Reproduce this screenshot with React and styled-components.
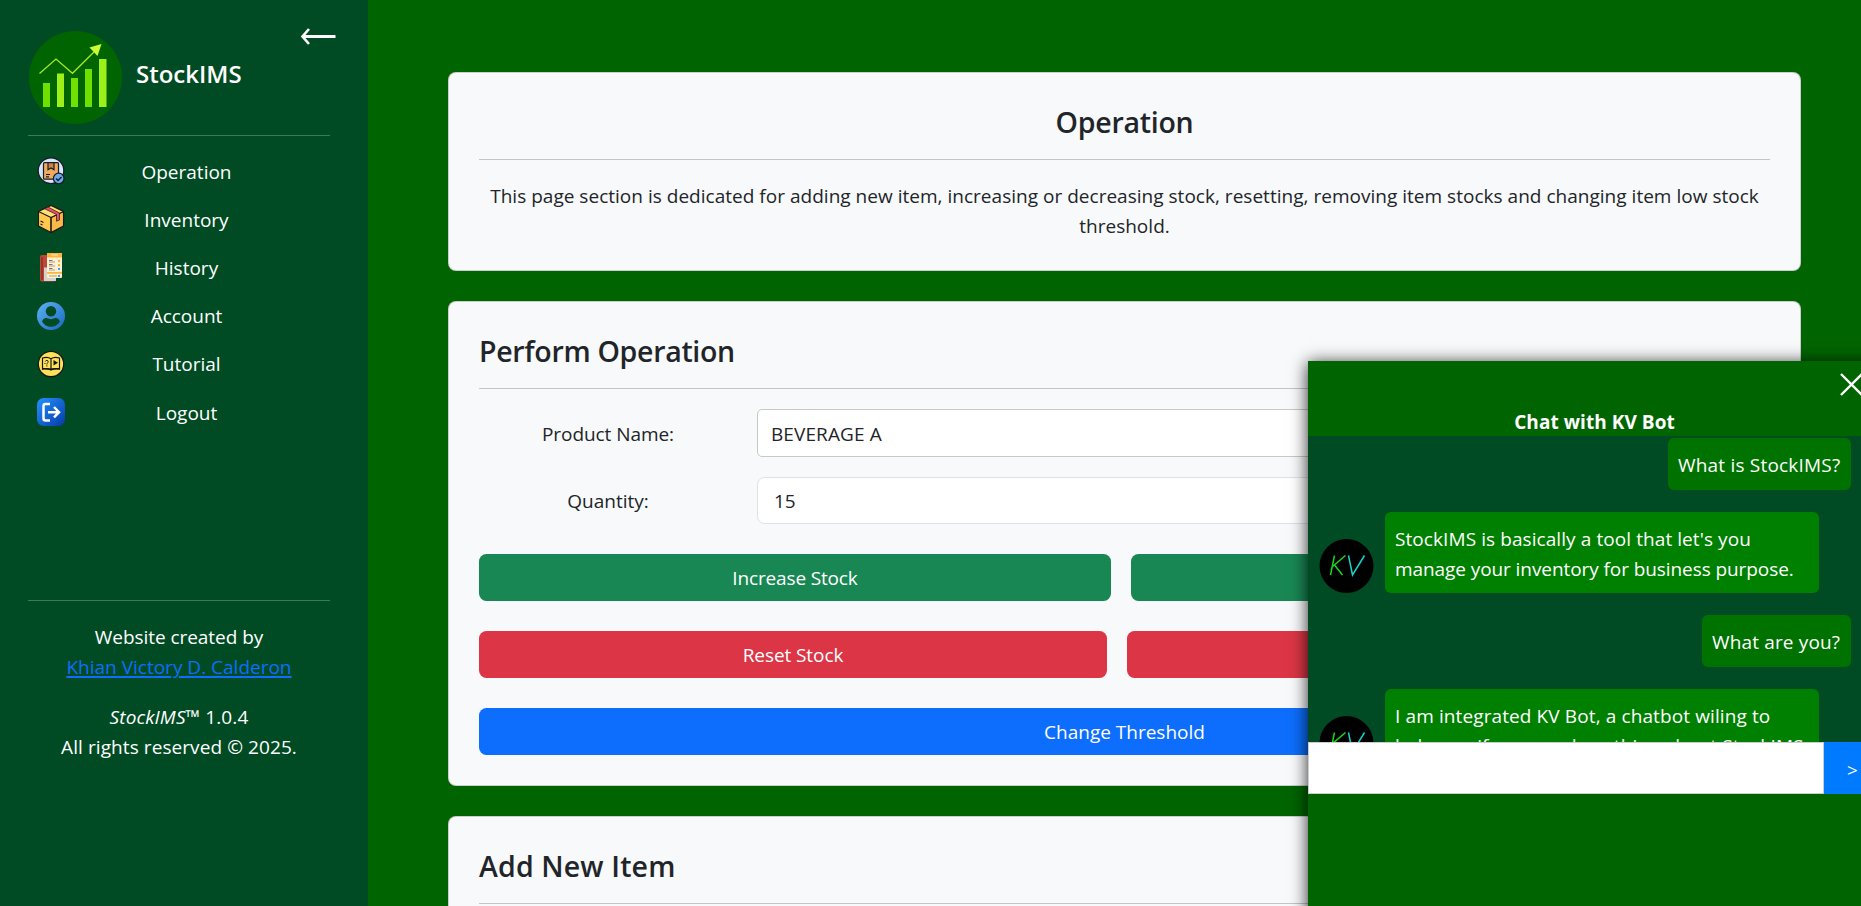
import React from "react";
import styled, { createGlobalStyle } from "styled-components";

const GlobalStyle = createGlobalStyle`
  *, *::before, *::after { box-sizing: border-box; }
  html, body { height: 100%; overflow: hidden; }
  body {
    margin: 0;
    background: #006400;
    color: #212529;
    font-family: "Open Sans", "Noto Sans", sans-serif;
    font-size: 19px;
    line-height: 30px;
  }
  h1, h2, p { margin: 0; }
  button, input, select { font: inherit; }
`;

/* Text fitted to a set advance width through its tracking */
const T = styled.span`
  letter-spacing: ${(p) => p.$ls || 0}px;
`;

const Page = styled.div`
  display: flex;
  width: 1861px;
  height: 906px;
  overflow: hidden;
  position: relative;
`;

const Sidebar = styled.aside`
  width: 368px;
  flex: none;
  height: 906px;
  background: #004b23;
  color: #fff;
  padding: 31px 38px 0 28px;
  display: flex;
  flex-direction: column;
`;

const Brand = styled.div`
  display: flex;
  align-items: center;
  height: 93px;
  padding-left: 1px;
`;

const BrandName = styled.h1`
  font-size: 24px;
  font-weight: 600;
  line-height: 30px;
  margin: -7px 0 0 14px;
  flex: 1;
`;

const CollapseButton = styled.button`
  align-self: flex-start;
  margin: -4px -6px 0 0;
  padding: 0;
  border: 0;
  background: none;
  display: flex;
`;

const SideRule = styled.hr`
  width: 302px;
  height: 1px;
  border: 0;
  margin: ${(p) => p.$top}px 0 0;
  background: #40785a;
`;

const Nav = styled.nav`
  display: flex;
  flex-direction: column;
  margin-top: 11px;
`;

const NavItem = styled.a`
  display: flex;
  align-items: center;
  height: 48.2px;
  padding-left: 9px;
  svg { flex: none; }
  span { width: 243px; text-align: center; padding-top: 1px; }
`;

const Credits = styled.div`
  margin-top: 21px;
  text-align: center;
  display: flex;
  flex-direction: column;
  gap: 20px;
  width: 302px;
`;

const CreditLink = styled.a`
  color: #0d6efd;
  text-decoration: underline;
  text-decoration-thickness: 2px;
  text-underline-offset: 2px;
`;

const Main = styled.main`
  flex: 1;
  padding: 72px 60px 0 80px;
  display: flex;
  flex-direction: column;
  gap: 30px;
`;

const Card = styled.section`
  flex: none;
  height: ${(p) => p.$h}px;
  padding: 30px;
  border: 1px solid rgba(0, 0, 0, 0.175);
  border-radius: 8px;
  background: #f8f9fa;
  text-align: ${(p) => (p.$center ? "center" : "left")};
`;

const CardTitle = styled.h2`
  font-size: 28.5px;
  font-weight: 600;
  line-height: 36px;
  height: 36px;
  padding-top: 1px;
`;

const Description = styled.p`
  padding-top: 1px;
`;

const Rule = styled.hr`
  height: 1px;
  border: 0;
  margin: 20px 0;
  background: #c2c4c6;
`;

const Field = styled.label`
  display: grid;
  grid-template-columns: 258px 1fr;
  column-gap: 20px;
  align-items: center;
  margin-bottom: 20px;
  > span { text-align: center; padding-top: 1px; }
`;

const Control = styled.div`
  height: ${(p) => (p.$select ? 48 : 47)}px;
  padding: ${(p) => (p.$select ? "2px 13px 0" : "0 16px")};
  display: flex;
  align-items: center;
  background: #fff;
  border: 1px solid ${(p) => (p.$select ? "#c8c8c8" : "#dee2e6")};
  border-radius: ${(p) => (p.$select ? 5 : 7.5)}px;
`;

const ButtonRow = styled.div`
  display: grid;
  grid-template-columns: ${(p) => p.$cols};
  gap: 20px;
  margin-top: 30px;
`;

const Button = styled.button`
  height: 47px;
  border: 0;
  border-radius: 7.5px;
  padding: 0;
  color: #fff;
  background: ${(p) => p.$bg};
`;

const ChatPanel = styled.section`
  position: absolute;
  left: 1308px;
  top: 361px;
  width: 573px;
  height: 565px;
  background: #006400;
  color: #fff;
  box-shadow: 0 2px 16px rgba(0, 0, 0, 0.85);
`;

const ChatHeader = styled.header`
  height: 75px;
  display: flex;
  flex-direction: column;
`;

const CloseButton = styled.button`
  align-self: flex-end;
  margin: 11px 17px 0 0;
  padding: 0;
  border: 0;
  background: none;
  display: flex;
  height: 25px;
`;

const ChatTitle = styled.div`
  margin-top: 10px;
  text-align: center;
  font-weight: 700;
`;

const Messages = styled.div`
  height: 306px;
  overflow: hidden;
  background: #004b23;
  padding: 2px 30px 0 11px;
  display: flex;
  flex-direction: column;
  gap: 22px;
`;

const UserBubble = styled.div`
  align-self: flex-end;
  flex: none;
  height: 52px;
  padding: 12px 10px 10px;
  border-radius: 6px;
  background: #007200;
  width: ${(p) => p.$w}px;
  white-space: nowrap;
`;

const BotRow = styled.div`
  display: flex;
  align-items: flex-end;
  flex: none;
  gap: 11px;
`;

const BotBubble = styled.div`
  width: 434px;
  height: 81px;
  padding: 12px 10px 9px;
  border-radius: 6px;
  background: #008000;
  white-space: nowrap;
`;

const Composer = styled.div`
  display: flex;
  height: 52px;
`;

const ChatInput = styled.input`
  width: 516px;
  border: 1px solid #ccc;
  background: #fff;
  outline: none;
  padding: 0 10px;
`;

const SendButton = styled.button`
  flex: 1;
  border: 0;
  padding: 4px 0 0;
  background: #007bff;
  color: #fff;
`;

const Logo = () => (
  <svg width="93" height="93" viewBox="0 0 93 93">
    <circle cx="46.5" cy="46.5" r="46.5" fill="#006400" />
    <g fill="#70e000">
      <rect x="14" y="52" width="7" height="24" />
      <rect x="42" y="47" width="7" height="29" />
      <rect x="56" y="38" width="7" height="38" />
    </g>
    <g fill="#9ef01a">
      <rect x="28" y="42.500" width="7" height="33.500" />
      <rect x="70" y="28" width="7.500" height="48" />
    </g>
    <path d="M10.500 42.500 27 28l16.500 14.300L66 20" fill="none" stroke="#a4e82a" strokeWidth="1.300" />
    <path d="M60.500 16.500 72.500 13l-4 12Z" fill="#ccff33" />
  </svg>
);

const ArrowLeft = () => (
  <svg width="36" height="20" viewBox="0 0 36 20" fill="none" stroke="#fff">
    <path d="M2.500 9.500H35.500" strokeWidth="3" />
    <path d="M9 2 2.500 9.500 9 17" strokeWidth="2.600" />
  </svg>
);

const OperationIcon = () => (
  <svg width="28" height="28" viewBox="0 0 28 28" stroke="#1b1b22" strokeWidth="1.200">
    <circle cx="14" cy="13.700" r="12.800" fill="#d5e5fb" />
    <rect x="6.500" y="5.700" width="15" height="16.500" rx="1" fill="#efaa60" />
    <path d="M11 5.700h6v7l-3-1.700-3 1.700Z" fill="#c98546" />
    <path d="M9 17.500h4M9 19.800h3" fill="none" />
    <circle cx="21.700" cy="21.500" r="5.300" fill="#6aaaf0" />
    <path d="m19 21.500 2 2 3.500-3.500" fill="none" strokeWidth="1.500" />
  </svg>
);

const InventoryIcon = () => (
  <svg width="28" height="30" viewBox="0 0 28 30" stroke="#1e1712" strokeWidth="1.100" strokeLinejoin="round">
    <path d="M1.500 7.500 14 1.500l12.500 6V22L14 28.500 1.500 22Z" fill="#ffc94f" />
    <path d="M14 13.500 26.500 7.500V22L14 28.500Z" fill="#f8b84a" />
    <path d="M1.500 7.500 14 1.500l12.500 6L14 13.500Z" fill="#ffdf73" />
    <path d="m7.500 4.700 3.500-1.700 11.500 6v7l-3 1.200v-6.700Z" fill="#e8506c" strokeWidth=".7" />
    <path d="M14 13.500v15M3.500 17l3 1.500M3.500 20l2 1" fill="none" />
  </svg>
);

const HistoryIcon = () => (
  <svg width="28" height="30" viewBox="0 0 28 30">
    <rect x="3" y="3" width="16" height="26.500" rx="2" fill="#b94a38" />
    <path d="M5 5v23" stroke="#8e3028" strokeWidth="1.500" />
    <path d="M7 15.500h12V29H7Z" fill="#d8d0cc" />
    <rect x="10" y="1" width="15" height="25" rx="1" fill="#fff0cf" />
    <path d="M10 1h15v4.500H10ZM10 20h15v1.700H10Z" fill="#ffb43f" />
    <path d="M14 3h7" stroke="#ffe0a0" strokeWidth="1.200" />
    <path d="M12 8.500h3.500M12 12.500h3.500M12 16.500h3.500" stroke="#777" strokeWidth="1" />
    <path d="M12 10h6M12 14h6M12 18h6M12 24h8" stroke="#958b80" strokeWidth=".8" />
    <path d="M21 9h2M21 13h2" stroke="#ffad3a" strokeWidth="2" />
    <path d="M21 17h2M21 24h2" stroke="#3f9be8" strokeWidth="2" />
  </svg>
);

const AccountIcon = () => (
  <svg width="28" height="28" viewBox="0 0 28 28">
    <defs>
      <linearGradient id="account" x1="0" y1="0" x2="1" y2="1">
        <stop offset="0" stopColor="#61b2f2" />
        <stop offset="1" stopColor="#1769c4" />
      </linearGradient>
    </defs>
    <circle cx="14" cy="14" r="14" fill="url(#account)" />
    <circle cx="14" cy="9.300" r="5.200" fill="#004b23" />
    <path d="M5 19.500c1-3 3.500-4.200 5.500-3.200 2.200 1.100 4.800 1.100 7 0 2-1 4.500.2 5.500 3.200-2 3.500-5.300 5.300-9 5.300s-7-1.800-9-5.300Z" fill="#004b23" />
  </svg>
);

const TutorialIcon = () => (
  <svg width="28" height="28" viewBox="0 0 28 28" stroke="#171717" fill="none">
    <circle cx="14" cy="14" r="12.700" fill="#ffe25a" strokeWidth="1.200" />
    <path d="M5.500 8c3-1 6-1 8.500.7C16.500 7 19.500 7 22.500 8v11c-3-.7-6-.5-8.500.6-2.500-1.100-5.500-1.300-8.500-.6ZM14 8.700v10.500" strokeWidth="1.200" />
    <path d="M5 18.300c3-.7 6-.5 9 .4 3-.9 6-1.100 9-.4v1.500c-3-.6-6-.4-9 .6-3-1-6-1.200-9-.6Z" fill="#171717" stroke="none" />
    <path d="m16.500 10 4.500 2.800-4.500 2.700Z" fill="#171717" stroke="none" />
    <path d="M8.200 11.500c.5-1.500 3-1.500 3 .2 0 1-1.300 1.200-1.300 2.800M9.900 15.300v1.200M7.500 13.500h1" strokeWidth="1" />
  </svg>
);

const LogoutIcon = () => (
  <svg width="28" height="28" viewBox="0 0 28 28">
    <defs>
      <linearGradient id="logout" x1="0" y1="0" x2="1" y2="1">
        <stop offset="0" stopColor="#2492ff" />
        <stop offset="1" stopColor="#063aa6" />
      </linearGradient>
    </defs>
    <rect width="28" height="28" rx="6.500" fill="url(#logout)" />
    <path d="M13 6H8.500Q6.500 6 6.500 8v12.500q0 2 2 2H13M11 14.200h11M17 9l5 5.200-5 5.200" fill="none" stroke="#fff" strokeWidth="2.500" />
  </svg>
);

const CloseIcon = () => (
  <svg width="25" height="25" viewBox="0 0 25 25" stroke="#fff" strokeWidth="2.400">
    <path d="m2 2 21 21M23 2 2 23" />
  </svg>
);

const BotAvatar = () => (
  <svg width="55" height="54" viewBox="0 0 55 54" fill="none" strokeWidth="1.500">
    <ellipse cx="27.500" cy="27" rx="27" ry="27" fill="#000" />
    <path d="M15.500 16.500 11.500 36M26.500 16.500 13 28M15.500 26 23.500 36" stroke="#19d719" />
    <path d="M29.500 16.500 33.500 36 45.500 16.500" stroke="#14d6cf" />
  </svg>
);

const NAV = [
  ["Operation", OperationIcon],
  ["Inventory", InventoryIcon],
  ["History", HistoryIcon],
  ["Account", AccountIcon],
  ["Tutorial", TutorialIcon],
  ["Logout", LogoutIcon],
];

export default function App() {
  return (
    <>
      <GlobalStyle />
      <Page>
        <Sidebar>
          <Brand>
            <Logo />
            <BrandName><T>StockIMS</T></BrandName>
            <CollapseButton aria-label="Collapse"><ArrowLeft /></CollapseButton>
          </Brand>
          <SideRule $top={11} />
          <Nav>
            {NAV.map(([label, Icon]) => (
              <NavItem key={label}><Icon /><T>{label}</T></NavItem>
            ))}
          </Nav>
          <SideRule $top={164} />
          <Credits>
            <p>
              <T $ls={-0.05}>Website created by</T><br />
              <CreditLink><T>Khian Victory D. Calderon</T></CreditLink>
            </p>
            <p>
              <T $ls={0.12}><i>StockIMS</i>™ 1.0.4</T><br />
              <T $ls={0.08}>All rights reserved © 2025.</T>
            </p>
          </Credits>
        </Sidebar>
        <Main>
          <Card $h={199} $center>
            <CardTitle><T $ls={-0.25}>Operation</T></CardTitle>
            <Rule />
            <Description><T $ls={0.02}>This page section is dedicated for adding new item, increasing or decreasing stock, resetting, removing item stocks and changing item low stock threshold.</T></Description>
          </Card>
          <Card $h={485}>
            <CardTitle><T $ls={-0.3}>Perform Operation</T></CardTitle>
            <Rule />
            <Field><T $ls={-0.06}>Product Name:</T><Control $select><T $ls={0.1}>BEVERAGE A</T></Control></Field>
            <Field><T>Quantity:</T><Control><T>15</T></Control></Field>
            <ButtonRow $cols="632px 1fr">
              <Button $bg="#198754"><T $ls={-0.15}>Increase Stock</T></Button>
              <Button $bg="#198754" aria-label="Decrease Stock" />
            </ButtonRow>
            <ButtonRow $cols="628px 1fr">
              <Button $bg="#dc3545"><T $ls={-0.08}>Reset Stock</T></Button>
              <Button $bg="#dc3545" aria-label="Remove Stock" />
            </ButtonRow>
            <ButtonRow $cols="1fr">
              <Button $bg="#0d6efd"><T>Change Threshold</T></Button>
            </ButtonRow>
          </Card>
          <Card $h={485}>
            <CardTitle><T $ls={0.15}>Add New Item</T></CardTitle>
            <Rule />
          </Card>
        </Main>
        <ChatPanel>
          <ChatHeader>
            <CloseButton aria-label="Close"><CloseIcon /></CloseButton>
            <ChatTitle><T $ls={0.06}>Chat with KV Bot</T></ChatTitle>
          </ChatHeader>
          <Messages>
            <UserBubble $w={183}><T $ls={0.2}>What is StockIMS?</T></UserBubble>
            <BotRow>
              <BotAvatar />
              <BotBubble>
                <T $ls={0.08}>StockIMS is basically a tool that let's you</T><br />
                <T $ls={-0.08}>manage your inventory for business purpose.</T>
              </BotBubble>
            </BotRow>
            <UserBubble $w={149}><T $ls={0.15}>What are you?</T></UserBubble>
            <BotRow>
              <BotAvatar />
              <BotBubble>
                <T $ls={0.11}>I am integrated KV Bot, a chatbot wiling to</T><br />
                <T $ls={0.11}>help you if you need anything about StockIMS</T>
              </BotBubble>
            </BotRow>
          </Messages>
          <Composer>
            <ChatInput />
            <SendButton>&gt;</SendButton>
          </Composer>
        </ChatPanel>
      </Page>
    </>
  );
}
